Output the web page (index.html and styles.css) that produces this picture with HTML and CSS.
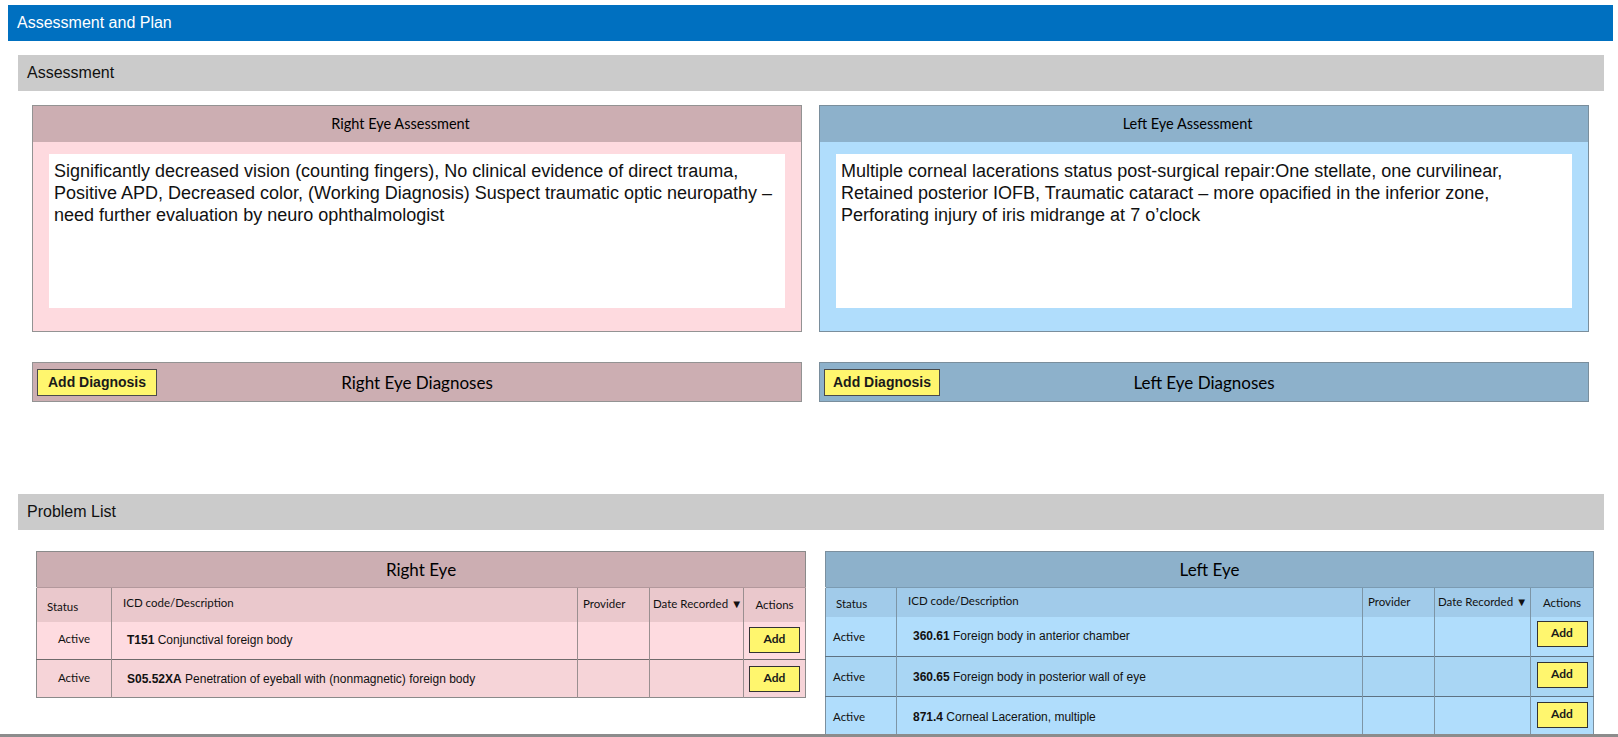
FILE: index.html
```html
<!DOCTYPE html>
<html lang="en">
<head>
<meta charset="utf-8">
<title>Assessment and Plan</title>
<link rel="stylesheet" href="styles.css">
</head>
<body>
<div class="page">
  <header class="page-title">Assessment and Plan</header>

  <div class="section-bar">Assessment</div>

  <div class="eye-row assess-row">
    <section class="assess-box pink">
      <div class="assess-head">Right Eye Assessment</div>
      <div class="assess-body">
        <div class="note">Significantly decreased vision (counting fingers), No clinical evidence of direct trauma, Positive APD, Decreased color, (Working Diagnosis) Suspect traumatic optic neuropathy – need further evaluation by neuro ophthalmologist</div>
      </div>
    </section>
    <section class="assess-box blue">
      <div class="assess-head">Left Eye Assessment</div>
      <div class="assess-body">
        <div class="note">Multiple corneal lacerations status post-surgical repair:One stellate, one curvilinear, Retained posterior IOFB, Traumatic cataract – more opacified in the inferior zone, Perforating injury of iris midrange at 7 o’clock</div>
      </div>
    </section>
  </div>

  <div class="eye-row diag-row">
    <div class="diag-bar pink">
      <button class="btn-yellow">Add Diagnosis</button>
      <span class="diag-title">Right Eye Diagnoses</span>
      <span></span>
    </div>
    <div class="diag-bar blue">
      <button class="btn-yellow">Add Diagnosis</button>
      <span class="diag-title">Left Eye Diagnoses</span>
      <span></span>
    </div>
  </div>

  <div class="section-bar problem-bar">Problem List</div>

  <div class="eye-row table-row">
    <table class="prob pink">
      <colgroup>
        <col class="c-status"><col class="c-icd"><col class="c-prov"><col class="c-date"><col>
      </colgroup>
      <thead>
        <tr class="t-title"><th colspan="5">Right Eye</th></tr>
        <tr class="t-head">
          <th class="h-status">Status</th>
          <th class="h-icd">ICD code/Description</th>
          <th class="h-prov">Provider</th>
          <th class="h-date">Date Recorded ▼</th>
          <th class="h-act">Actions</th>
        </tr>
      </thead>
      <tbody>
        <tr class="r-a">
          <td class="st">Active</td>
          <td class="icd"><b>T151</b> Conjunctival foreign body</td>
          <td></td><td></td>
          <td class="act"><button class="btn-add">Add</button></td>
        </tr>
        <tr class="r-b">
          <td class="st">Active</td>
          <td class="icd"><b>S05.52XA</b> Penetration of eyeball with (nonmagnetic) foreign body</td>
          <td></td><td></td>
          <td class="act"><button class="btn-add">Add</button></td>
        </tr>
      </tbody>
    </table>

    <table class="prob blue">
      <colgroup>
        <col class="c-status"><col class="c-icd"><col class="c-prov"><col class="c-date"><col>
      </colgroup>
      <thead>
        <tr class="t-title"><th colspan="5">Left Eye</th></tr>
        <tr class="t-head">
          <th class="h-status">Status</th>
          <th class="h-icd">ICD code/Description</th>
          <th class="h-prov">Provider</th>
          <th class="h-date">Date Recorded ▼</th>
          <th class="h-act">Actions</th>
        </tr>
      </thead>
      <tbody>
        <tr class="r-a">
          <td class="st">Active</td>
          <td class="icd"><b>360.61</b> Foreign body in anterior chamber</td>
          <td></td><td></td>
          <td class="act"><button class="btn-add">Add</button></td>
        </tr>
        <tr class="r-b">
          <td class="st">Active</td>
          <td class="icd"><b>360.65</b> Foreign body in posterior wall of eye</td>
          <td></td><td></td>
          <td class="act"><button class="btn-add">Add</button></td>
        </tr>
        <tr class="r-a">
          <td class="st">Active</td>
          <td class="icd"><b>871.4</b> Corneal Laceration, multiple</td>
          <td></td><td></td>
          <td class="act"><button class="btn-add">Add</button></td>
        </tr>
      </tbody>
    </table>
  </div>
</div>
<div class="bottom-edge"></div>
</body>
</html>
```

FILE: styles.css
```css
* { box-sizing: border-box; }

html, body {
  margin: 0;
  padding: 0;
  background: #ffffff;
}

body {
  font-family: "Liberation Sans", Arial, sans-serif;
  color: #000;
}

th, td {
  padding: 0;
  font-weight: normal;
}

.page {
  padding-top: 5px;
  padding-bottom: 40px;
}

.page-title {
  margin-left: 8px;
  width: 1605px;
  height: 36px;
  line-height: 36px;
  padding-left: 9px;
  background: #0070c0;
  color: #ffffff;
  font-size: 16px;
}

.section-bar {
  margin: 14px 0 0 18px;
  width: 1586px;
  height: 36px;
  line-height: 36px;
  padding-left: 9px;
  background: #cbcbcb;
  font-size: 16px;
  color: #111;
}

.problem-bar {
  margin-top: 92px;
}

.eye-row {
  display: flex;
  align-items: flex-start;
}

.assess-row {
  margin: 14px 0 0 32px;
  gap: 17px;
}

.assess-box {
  width: 770px;
  border: 1px solid #939393;
}

.assess-box.blue { border-color: #7a8e9c; }

.assess-head {
  height: 36px;
  line-height: 36px;
  text-align: center;
  padding-right: 33px;
  font-family: Lato, "Open Sans", sans-serif;
  font-size: 14.5px;
  color: #000;
}

.pink .assess-head { background: #ccaeb2; }
.blue .assess-head { background: #8db1cb; }

.assess-body {
  padding: 12px 16px 23px 16px;
}

.pink .assess-body { background: #fedadf; }
.blue .assess-body { background: #b0ddfc; }

.note {
  height: 154px;
  padding: 6px 5px;
  background: #ffffff;
  font-size: 18px;
  line-height: 22px;
  color: #111;
}

.diag-row {
  margin: 30px 0 0 32px;
  gap: 17px;
}

.diag-bar {
  width: 770px;
  height: 40px;
  padding: 0 4px;
  border: 1px solid #939393;
  display: grid;
  grid-template-columns: 1fr auto 1fr;
  align-items: center;
}

.diag-bar.pink { background: #ccaeb2; }
.diag-bar.blue { background: #8db1cb; border-color: #7a8e9c; }

.btn-yellow {
  justify-self: start;
  height: 27px;
  padding: 0 10px;
  background: #fff66e;
  border: 1px solid #4a4a4a;
  font-family: "Liberation Sans", Arial, sans-serif;
  font-weight: bold;
  font-size: 14px;
  color: #1a1a1a;
}

.blue .btn-yellow { padding: 0 8px; }

.diag-title {
  font-family: Lato, "Open Sans", sans-serif;
  font-size: 17px;
  color: #000;
}

.table-row {
  margin: 21px 0 0 36px;
  gap: 19px;
}

.prob {
  width: 770px;
  table-layout: fixed;
  border-collapse: collapse;
  border: 1px solid #8a8a8a;
}

.prob.blue { width: 769px; border-color: #7b8f9e; }

.prob .c-icd { width: 466px; }
.prob .c-prov { width: 72px; }
.prob.pink .c-status { width: 75px; }
.prob.pink .c-date { width: 94px; }
.prob.blue .c-status { width: 71px; }
.prob.blue .c-date { width: 96px; }

.t-title th {
  height: 36px;
  text-align: center;
  font-family: Lato, "Open Sans", sans-serif;
  font-size: 17px;
  color: #000;
}

.pink .t-title th { background: #ccaeb2; }
.blue .t-title th { background: #8db1cb; }

.t-head th {
  font-family: Lato, "Open Sans", sans-serif;
  font-size: 11.5px;
  color: #111;
  text-align: left;
  vertical-align: middle;
  border-top: 1px solid rgba(0, 0, 0, 0.12);
}

.pink .t-head th { height: 34px; background: #eac8cc; }
.blue .t-head th { height: 29px; background: #a1cbea; }

.t-head .h-status { padding-left: 10px; padding-top: 3px; }
.t-head .h-icd { padding-left: 11px; padding-bottom: 4px; }
.t-head .h-prov { padding-left: 5px; padding-bottom: 2px; }
.t-head .h-date { padding-left: 3px; padding-bottom: 2px; white-space: nowrap; }
.t-head .h-act { text-align: center; }

.pink .t-head th + th,
.pink tbody td + td { border-left: 1px solid #9a8f90; }
.blue .t-head th + th,
.blue tbody td + td { border-left: 1px solid #7d95a6; }

.pink tbody tr { height: 38px; }
.blue tbody tr { height: 40px; }

.pink .r-a td { background: #fedbe0; }
.pink .r-b td { background: #f6d4d8; }
.blue .r-a td { background: #b0ddfc; }
.blue .r-b td { background: #a9d6f4; }

.pink tbody tr + tr td { border-top: 1px solid #6f6a6b; }
.blue tbody tr + tr td { border-top: 1px solid #5e7282; }

.prob .st {
  font-family: Lato, "Open Sans", sans-serif;
  font-size: 11.5px;
  color: #111;
}

.pink .st { text-align: center; padding-bottom: 3px; }
.blue .st { text-align: left; padding-left: 7px; }

.prob .icd {
  padding-left: 15px;
  font-size: 12px;
  color: #111;
  white-space: nowrap;
}

.blue .icd { padding-left: 16px; }

.prob .act {
  text-align: center;
}

.btn-add {
  width: 51px;
  height: 26px;
  padding: 0 0 3px;
  background: #fff66e;
  border: 1px solid #333333;
  font-family: Lato, "Open Sans", sans-serif;
  font-weight: bold;
  font-size: 12px;
  color: #1a1a1a;
  vertical-align: middle;
}

.blue .btn-add { margin-bottom: 4px; }

.bottom-edge {
  position: fixed;
  left: 0;
  right: 0;
  bottom: 0;
  height: 3px;
  background: #8c8c8c;
}
```
